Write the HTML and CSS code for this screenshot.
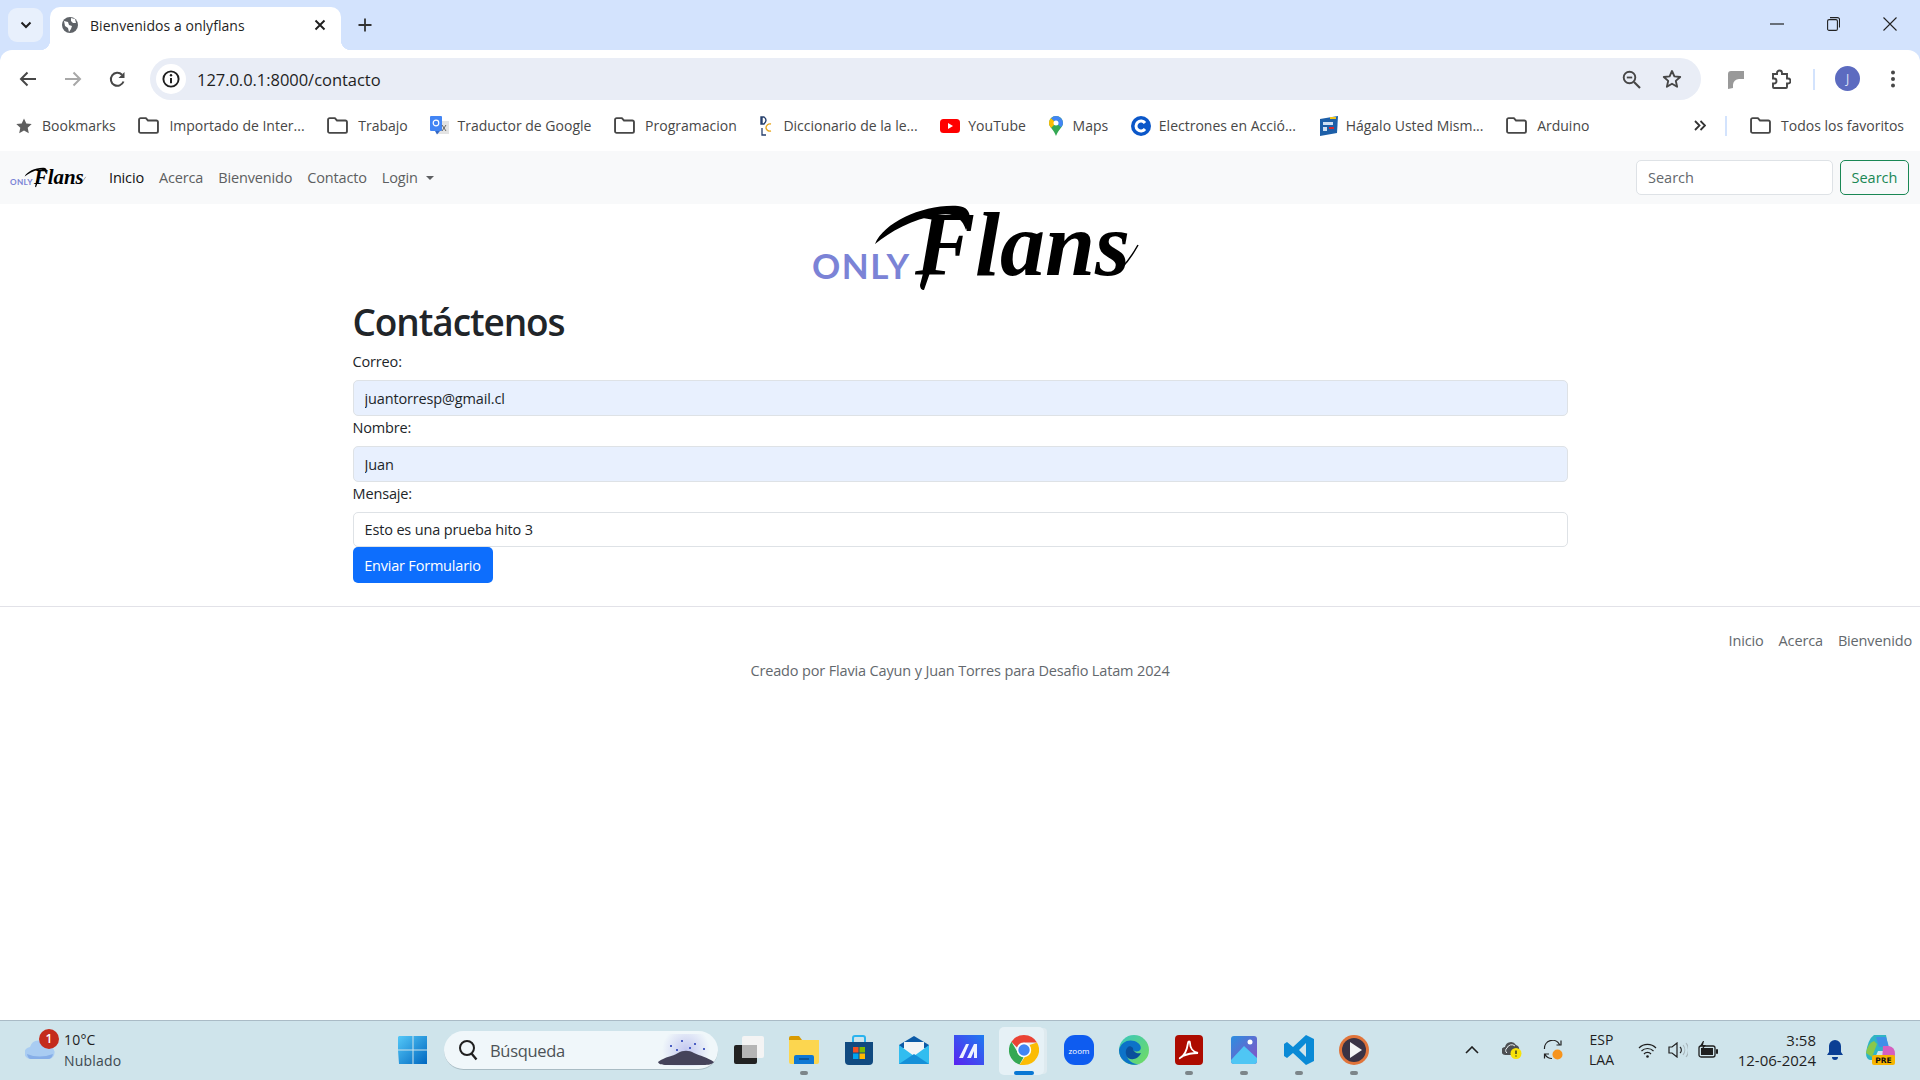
FILE: index.html
```html
<!DOCTYPE html>
<html lang="es">
<head>
<meta charset="utf-8">
<title>Bienvenidos a onlyflans</title>
<link rel="stylesheet" href="styles.css">
</head>
<body>
<svg class="defs" width="0" height="0" aria-hidden="true">
  <symbol id="folder" viewBox="0 0 20 16"><path d="M2.5 1h5l2 2.2h8a1.5 1.5 0 0 1 1.5 1.5v8.8a1.5 1.5 0 0 1-1.5 1.5h-15A1.5 1.5 0 0 1 1 13.5v-11A1.5 1.5 0 0 1 2.5 1z" fill="none" stroke="#474747" stroke-width="1.8"/></symbol>
</svg>
<div class="app">
  <header class="tabstrip">
    <button class="tablist"><svg width="12" height="8" viewBox="0 0 12 8"><path d="M1.5 1.5 6 6l4.5-4.5" fill="none" stroke="#1f1f1f" stroke-width="2"/></svg></button>
    <div class="tab">
      <svg class="favicon" width="16" height="16" viewBox="0 0 16 16"><circle cx="8" cy="8" r="8" fill="#5f6368"/><path d="M2 4l4 1 1 3 3 1-1 3-2 3-1-4-3-2zM9 1l4 1 1 4-3 0-2-2z" fill="#fff"/></svg>
      <span class="tab-title">Bienvenidos a onlyflans</span>
      <svg class="tab-close" width="12" height="12" viewBox="0 0 12 12"><path d="M1.5 1.5l9 9m0-9l-9 9" stroke="#1f1f1f" stroke-width="1.9"/></svg>
    </div>
    <svg class="newtab" width="14" height="14" viewBox="0 0 14 14"><path d="M7 0.5v13M0.5 7h13" stroke="#333" stroke-width="1.8"/></svg>
    <div class="winctl">
      <span class="wincell"><svg width="14" height="2" viewBox="0 0 14 2"><path d="M0 1h14" stroke="#222" stroke-width="1.2"/></svg></span>
      <span class="wincell"><svg width="13" height="14" viewBox="0 0 13 14"><rect x="0.6" y="2.6" width="9.8" height="10.8" rx="1.5" fill="none" stroke="#222" stroke-width="1.1"/><path d="M3 .6h7.5a2 2 0 0 1 2 2v8" fill="none" stroke="#222" stroke-width="1.1"/></svg></span>
      <span class="wincell"><svg width="14" height="14" viewBox="0 0 14 14"><path d="M.5.5l13 13m0-13l-13 13" stroke="#222" stroke-width="1.1"/></svg></span>
    </div>
  </header>

  <div class="toolbar-wrap">
  <div class="toolbar">
    <span class="tbcell"><svg width="18" height="16" viewBox="0 0 18 16"><path d="M17 8H2M8.500 1.500 2 8l6.500 6.500" fill="none" stroke="#474747" stroke-width="2"/></svg></span>
    <span class="tbcell"><svg width="18" height="16" viewBox="0 0 18 16"><path d="M1 8h15M9.500 1.500 16 8l-6.500 6.500" fill="none" stroke="#a8a8a8" stroke-width="2"/></svg></span>
    <span class="tbcell"><svg width="17" height="17" viewBox="0 0 17 17"><path d="M14.500 10.500A6.500 6.500 0 1 1 13 3.700" fill="none" stroke="#474747" stroke-width="2"/><path d="M15.500 1v6h-6z" fill="#474747"/></svg></span>
    <div class="omnibox">
      <span class="site-info"><svg width="18" height="18" viewBox="0 0 18 18"><circle cx="9" cy="9" r="7.600" fill="none" stroke="#1f1f1f" stroke-width="1.900"/><path d="M9 8v5.200" stroke="#1f1f1f" stroke-width="2"/><circle cx="9" cy="5.300" r="1.200" fill="#1f1f1f"/></svg></span>
      <span class="url">127.0.0.1:8000/contacto</span>
      <svg class="omni-zoom" width="19" height="19" viewBox="0 0 19 19"><circle cx="7.500" cy="7.500" r="5.800" fill="none" stroke="#474747" stroke-width="1.900"/><path d="M12 12l6 6" stroke="#474747" stroke-width="2.100"/><path d="M4.800 7.500h5.400" stroke="#474747" stroke-width="1.800"/></svg>
      <svg class="omni-star" width="20" height="20" viewBox="0 0 20 20"><path d="M10 2l2.400 5.400 5.800.6-4.400 3.900 1.300 5.800-5.100-3-5.100 3 1.300-5.800L1.800 8l5.800-.6z" fill="none" stroke="#474747" stroke-width="1.900" stroke-linejoin="round"/></svg>
    </div>
    <span class="tbcell tb-ext"><svg width="19" height="19" viewBox="0 0 19 19"><path d="M2 19V4a3 3 0 0 1 3-3h13v8h-5a6 6 0 0 0-6 6v3z" fill="#999"/></svg></span>
    <span class="tbcell"><svg width="20" height="20" viewBox="0 0 20 20"><path d="M2 5h4V4a2.500 2.500 0 0 1 5 0v1h5v4.500h1a2.500 2.500 0 0 1 0 5h-1V18a1 1 0 0 1-1 1H3a1 1 0 0 1-1-1v-3.500h1a2.500 2.500 0 0 0 0-5H2z" fill="none" stroke="#474747" stroke-width="1.900"/></svg></span>
    <span class="tb-divider"></span>
    <span class="avatar">J</span>
    <span class="tbcell"><svg width="4" height="18" viewBox="0 0 4 18"><circle cx="2" cy="2.500" r="2" fill="#474747"/><circle cx="2" cy="9" r="2" fill="#474747"/><circle cx="2" cy="15.500" r="2" fill="#474747"/></svg></span>
  </div>
  </div>

  <nav class="bookmarks">
    <span class="bm"><svg width="16" height="16" viewBox="0 0 16 16"><path d="M8 .5l2.300 5 5.400.6-4 3.700 1.100 5.400L8 12.500l-4.800 2.700 1.100-5.400-4-3.700 5.400-.6z" fill="#5f5f5f"/></svg>Bookmarks</span>
    <span class="bm"><svg class="ic-folder"><use href="#folder"/></svg>Importado de Inter...</span>
    <span class="bm"><svg class="ic-folder"><use href="#folder"/></svg>Trabajo</span>
    <span class="bm bm-tight"><svg width="19" height="20" viewBox="0 0 19 20"><rect x="7" y="5" width="12" height="13" fill="#e3e3e3"/><rect width="12" height="15" rx="1" fill="#4285f4"/><path d="M5 15h5l-3 3.500z" fill="#3367c4"/><circle cx="6" cy="7" r="2.800" fill="none" stroke="#fff" stroke-width="1.200"/><path d="M12 9l4 6m0-6l-4 6" stroke="#666" stroke-width="1"/></svg>Traductor de Google</span>
    <span class="bm"><svg class="ic-folder"><use href="#folder"/></svg>Programacion</span>
    <span class="bm"><svg width="14" height="20" viewBox="0 0 14 20"><path d="M2 1h3q4 3 0 7H2zM3 1v7" fill="none" stroke="#27406d" stroke-width="1.400"/><path d="M12 8a4 4 0 0 0-5 4 4 4 0 0 0 5 3" fill="none" stroke="#e9a820" stroke-width="1.400"/><path d="M3 12v7h4" fill="none" stroke="#27406d" stroke-width="1.300"/></svg>Diccionario de la le...</span>
    <span class="bm bm-tight"><svg width="20" height="14" viewBox="0 0 20 14"><rect width="20" height="14" rx="3.500" fill="#f00"/><path d="M8 4l5 3-5 3z" fill="#fff"/></svg>YouTube</span>
    <span class="bm"><svg width="14" height="20" viewBox="0 0 14 20"><path d="M7 0a7 7 0 0 1 7 7c0 4-5 7-7 13-2-6-7-9-7-13a7 7 0 0 1 7-7z" fill="#34a853"/><path d="M2 2.200A7 7 0 0 1 7 0a7 7 0 0 1 5 2L7 7z" fill="#4285f4"/><path d="M0 7c0-2 .8-3.600 2-4.800L7 7l-5 5C1 10.500 0 9 0 7z" fill="#fbbc04"/><path d="M12 2a7 7 0 0 1 2 5c0 1.500-.8 3-1.800 4.300L7 7z" fill="#4285f4"/><circle cx="7" cy="7" r="2.500" fill="#fff"/></svg>Maps</span>
    <span class="bm bm-tight"><svg width="20" height="20" viewBox="0 0 20 20"><circle cx="10" cy="10" r="10" fill="#0b57c9"/><path d="M14 7a5 5 0 1 0 0 6" fill="none" stroke="#fff" stroke-width="3"/></svg>Electrones en Acció...</span>
    <span class="bm bm-tight"><svg width="19" height="20" viewBox="0 0 19 20"><path d="M1 3l18-3-1 17-17 3z" fill="#1d5fa8"/><path d="M4 6h10v3H4zM4 11h4v4H4z" fill="#cfe0f2"/><path d="M10 11h5v2h-5z" fill="#d8262c"/><path d="M11 1h6v2h-6z" fill="#f0c419"/></svg>Hágalo Usted Mism...</span>
    <span class="bm"><svg class="ic-folder"><use href="#folder"/></svg>Arduino</span>
    <svg class="bm-more" width="12" height="11" viewBox="0 0 12 11"><path d="M1 1l4.500 4.500L1 10M6.500 1 11 5.500 6.500 10" fill="none" stroke="#333" stroke-width="1.800"/></svg>
    <span class="bm-divider"></span>
    <span class="bm"><svg class="ic-folder"><use href="#folder"/></svg>Todos los favoritos</span>
  </nav>

  <div class="navbar">
    <svg class="logo-small" viewBox="0 0 327 92" width="76" height="36">
      <text class="logo-only" x="0" y="75">ONLY</text>
      <text class="logo-flans" x="103" y="71">Flans</text>
      <path class="logo-swash" d="M63 40C72 18 112 0 146 2c14 1 14 14 8 24-4-12-12-18-28-15C100 15 78 28 63 40zM114 58l7 2-9 26q-4 0-4-5z"/>
      <path class="logo-tail" d="M300 70Q312 66 326 41"/>
    </svg>
    <a class="nav-link active">Inicio</a>
    <a class="nav-link">Acerca</a>
    <a class="nav-link">Bienvenido</a>
    <a class="nav-link">Contacto</a>
    <a class="nav-link">Login<i class="caret"></i></a>
    <input class="nav-search" placeholder="Search">
    <button class="btn-search">Search</button>
  </div>

  <main class="page">
    <div class="hero">
      <svg class="logo-big" viewBox="0 0 357 92" width="357" height="92">
        <text class="logo-only" x="30" y="75">ONLY</text>
        <text class="logo-flans" x="133" y="71">Flans</text>
        <path class="logo-swash" d="M93 40C102 18 142 0 176 2c14 1 14 14 8 24-4-12-12-18-28-15C130 15 108 28 93 40zM144 58l7 2-9 26q-4 0-4-5z"/>
        <path class="logo-tail" d="M330 70Q342 66 356 41"/>
      </svg>
    </div>
    <section class="container">
      <h1>Contáctenos</h1>
      <form class="contact">
        <label>Correo:</label>
        <input class="field autofill" value="juantorresp@gmail.cl">
        <label>Nombre:</label>
        <input class="field autofill" value="Juan">
        <label>Mensaje:</label>
        <input class="field last" value="Esto es una prueba hito 3">
        <button class="send" type="button">Enviar Formulario</button>
      </form>
    </section>
    <footer class="foot">
      <div class="foot-links"><a>Inicio</a><a>Acerca</a><a>Bienvenido</a></div>
      <p class="foot-text">Creado por Flavia Cayun y Juan Torres para Desafio Latam 2024</p>
    </footer>
  </main>

  <div class="taskbar">
    <div class="weather">
      <svg class="cloud" width="30" height="20" viewBox="0 0 30 20"><path d="M6 20a6 6 0 0 1-1-12 9 9 0 0 1 17-1 6.500 6.500 0 0 1 2 13z" fill="#a9ccf2"/><path d="M2 15q12 5 26 0-1 5-5 5H6q-3 0-4-5z" fill="#86aee8"/></svg>
      <span class="badge">1</span>
      <div class="weather-text"><span class="temp">10°C</span><span>Nublado</span></div>
    </div>
    <span class="tk">
      <svg width="30" height="30" viewBox="0 0 30 30"><defs><linearGradient id="w" x1="0" y1="0" x2="1" y2="1"><stop offset="0" stop-color="#54c8f8"/><stop offset="1" stop-color="#0067c0"/></linearGradient></defs><path d="M1 1h13.500v13.500H0V2zM15.500 1H29v13.500H15.500zM0 15.500h14.500V29H1zM15.500 15.500H29V29H15.500z" fill="url(#w)"/></svg>
    </span>
    <div class="search">
      <svg width="20" height="22" viewBox="0 0 20 22"><circle cx="9" cy="9" r="7" fill="none" stroke="#1f1f1f" stroke-width="2"/><path d="M13.500 14.500l5 6" stroke="#1f1f1f" stroke-width="2.300"/></svg>
      <span>Búsqueda</span>
      <svg class="search-art" width="60" height="32" viewBox="0 0 60 32"><defs><radialGradient id="g"><stop offset="0" stop-color="#c4c8f0"/><stop offset="1" stop-color="#f0f7fa"/></radialGradient></defs><circle cx="30" cy="16" r="24" fill="url(#g)"/><path d="M2 28c8-6 14-5 20-9 5-3 11-3 16 0 6 3 13 4 20 9-2 3-8 3-12 3H12c-4 0-9 0-10-3z" fill="#45435a"/><path d="M14 12h2M25 7h2M38 10h2M47 15h2M20 16h2M33 14h2" stroke="#4c5fc4" stroke-width="2"/></svg>
    </div>
    <span class="tk tk-first">
      <svg width="30" height="28" viewBox="0 0 30 28"><rect y="9" width="23" height="19" rx="2" fill="#222"/><rect x="8" width="22" height="22" rx="2" fill="#f4f4f4"/><rect x="8" y="9" width="15" height="13" fill="#b5b5b5"/></svg>
    </span>
    <span class="tk on">
      <svg width="30" height="28" viewBox="0 0 30 28"><path d="M0 2a2 2 0 0 1 2-2h8l3 4H0z" fill="#d99a00"/><path d="M0 4h30v22a2 2 0 0 1-2 2H2a2 2 0 0 1-2-2z" fill="#fcd64f"/><path d="M5 28v-7a2 2 0 0 1 2-2h16a2 2 0 0 1 2 2v7z" fill="#0f78d4"/><path d="M10 23h10" stroke="#0a4c8a" stroke-width="1.500"/></svg>
    </span>
    <span class="tk">
      <svg width="30" height="30" viewBox="0 0 30 30"><path d="M9 7V3a2 2 0 0 1 2-2h8a2 2 0 0 1 2 2v4" fill="none" stroke="#2ab3ee" stroke-width="2"/><path d="M1 7h28v19a4 4 0 0 1-4 4H5a4 4 0 0 1-4-4z" fill="#114a80"/><rect x="9" y="12" width="5.500" height="5.500" fill="#f25022"/><rect x="15.500" y="12" width="5.500" height="5.500" fill="#7fba00"/><rect x="9" y="18.500" width="5.500" height="5.500" fill="#00a4ef"/><rect x="15.500" y="18.500" width="5.500" height="5.500" fill="#ffb900"/></svg>
    </span>
    <span class="tk">
      <svg width="30" height="28" viewBox="0 0 30 28"><path d="M0 9 15 0l15 9v3H0z" fill="#0c5aa6"/><path d="M5 6h20v9l-10 7-10-7z" fill="#f2f5f7"/><path d="M0 9l15 11L30 9v19H0z" fill="#31bdf0"/><path d="M0 28l15-10 15 10z" fill="#1590d8"/></svg>
    </span>
    <span class="tk">
      <svg width="30" height="30" viewBox="0 0 30 30"><defs><linearGradient id="m" x1="0" y1="1" x2="1" y2="0"><stop offset="0" stop-color="#5b22f0"/><stop offset="1" stop-color="#1e7cf0"/></linearGradient></defs><rect width="30" height="30" fill="url(#m)"/><path d="M5 23l7-14h3L9 23zM13 23l7-14h3v14h-3v-7l-3 7z" fill="#eef2ff"/></svg>
    </span>
    <span class="tk active">
      <svg width="30" height="30" viewBox="0 0 30 30"><path d="M15 0a15 15 0 0 1 13 7.500H15a7.500 7.500 0 0 0-7 5L2.400 6.800A15 15 0 0 1 15 0z" fill="#ea4335"/><path d="M2.400 6.800 8.500 17a7.500 7.500 0 0 0 6 5.400L10.500 29.400A15 15 0 0 1 2.400 6.800z" fill="#34a853"/><path d="M28 7.500A15 15 0 0 1 15 30h-4.500l6-9.200A7.500 7.500 0 0 0 20.500 10z" fill="#fbbc04"/><circle cx="15" cy="15" r="7.200" fill="#fff"/><circle cx="15" cy="15" r="5.700" fill="#4285f4"/></svg>
    </span>
    <span class="tk">
      <svg width="30" height="30" viewBox="0 0 30 30"><rect width="30" height="30" rx="11" fill="#0e5cf0"/><text class="zoomtxt" x="15" y="18.500">zoom</text></svg>
    </span>
    <span class="tk">
      <svg width="30" height="30" viewBox="0 0 30 30"><defs><linearGradient id="e" x1="0" y1="0" x2="1" y2="1"><stop offset="0" stop-color="#38c6c0"/><stop offset="1" stop-color="#74dd5c"/></linearGradient></defs><circle cx="15" cy="15" r="15" fill="url(#e)"/><path d="M0 15C2 6 12 3 19 8c3 2 4 6 1 8-3 1-7 0-6-3-5 0-7 4-6 8 1 5 7 9 13 8-10 3-21-3-21-14z" fill="#0c72c8"/><path d="M14 13c0 4 4 6 8 5-2 5-8 8-13 5-3-3-3-9 0-11 1-1 3-1 5 1z" fill="#0a4f9c"/></svg>
    </span>
    <span class="tk on">
      <svg width="28" height="30" viewBox="0 0 28 30"><rect width="28" height="30" rx="4" fill="#ad0b00"/><path d="M5 23c4-2 7-8 8-15 .3-2 2-2 2 0 0 5 3 9 8 10-5 0-11 1-15 3-2 1-4 3-3 2z" fill="none" stroke="#fff" stroke-width="1.800"/></svg>
    </span>
    <span class="tk on">
      <svg width="26" height="28" viewBox="0 0 26 28"><defs><linearGradient id="p" x1="0" y1="0" x2="1" y2="1"><stop offset="0" stop-color="#2b8fe0"/><stop offset="1" stop-color="#8a4fc4"/></linearGradient></defs><rect width="26" height="28" rx="3" fill="url(#p)"/><path d="M0 24 13 10l13 12v3a3 3 0 0 1-3 3H3a3 3 0 0 1-3-3z" fill="#4fc6f4"/><circle cx="19" cy="6" r="2.500" fill="#fff"/></svg>
    </span>
    <span class="tk on">
      <svg width="30" height="30" viewBox="0 0 30 30"><path d="M22 0l8 4v22l-8 4-13-12-6 5-3-2v-12l3-2 6 5zm0 8-7 7 7 7z" fill="#0a8ad6"/></svg>
    </span>
    <span class="tk on">
      <svg width="30" height="30" viewBox="0 0 30 30"><circle cx="15" cy="15" r="15" fill="#e0743a"/><circle cx="15" cy="15" r="12" fill="#3b3344"/><path d="M11 7l12 8-12 8z" fill="#f4f4f4"/></svg>
    </span>

    <div class="tray">
      <svg class="t-chev" width="14" height="8" viewBox="0 0 14 8"><path d="M1 7l6-6 6 6" fill="none" stroke="#1f1f1f" stroke-width="1.600"/></svg>
      <span class="t-cloud"><svg width="20" height="18" viewBox="0 0 20 18"><path d="M4 14a4 4 0 0 1-1-8 6 6 0 0 1 11-2 4 4 0 0 1 3 5l-5 5z" fill="#4c4f52"/><path d="M5 12a3 3 0 0 1 0-5 5 5 0 0 1 8-2" fill="none" stroke="#e8eef0" stroke-width="1"/><circle cx="14" cy="12.500" r="5.500" fill="#f7e20a"/><path d="M14 9.500v3.500M14 14.500v1" stroke="#222" stroke-width="1.300"/></svg></span>
      <span class="t-sync"><svg width="20" height="20" viewBox="0 0 20 20"><path d="M1.500 9A8 8 0 0 1 16.500 4.500M18 .5V5h-4.500M1.500 18.500V14H6M2 14.500a8 8 0 0 0 7 4" fill="none" stroke="#222" stroke-width="1.200"/><circle cx="14.500" cy="14.500" r="5" fill="#f7941d"/></svg></span>
      <span class="t-lang"><span>ESP</span><span>LAA</span></span>
      <span class="t-wifi"><svg width="19" height="16" viewBox="0 0 19 16"><path d="M1 6a12 12 0 0 1 17 0M3.500 9a8.500 8.500 0 0 1 12 0M6 12a4.500 4.500 0 0 1 7 0" fill="none" stroke="#1f1f1f" stroke-width="1.200"/><circle cx="9.500" cy="14.500" r="1.300" fill="#1f1f1f"/></svg></span>
      <span class="t-vol"><svg width="20" height="16" viewBox="0 0 20 16"><path d="M1 5h3l5-4v14l-5-4H1z" fill="none" stroke="#1f1f1f" stroke-width="1.200"/><path d="M12 5a4 4 0 0 1 0 6" fill="none" stroke="#1f1f1f" stroke-width="1.100"/><path d="M15 3a8 8 0 0 1 0 10M18 1a11 11 0 0 1 0 14" fill="none" stroke="#a8b5ba" stroke-width="1.100"/></svg></span>
      <span class="t-bat"><svg width="20" height="18" viewBox="0 0 20 18"><rect x="1" y="5" width="16" height="11" rx="2" fill="none" stroke="#1f1f1f" stroke-width="1.300"/><rect x="3" y="7" width="12" height="7" fill="#1f1f1f"/><rect x="18" y="8" width="2" height="5" rx="1" fill="#1f1f1f"/><path d="M5 0 2 5h3l-1 4 4-5H5l1-4z" fill="#1f1f1f"/></svg></span>
      <span class="t-clock"><span>3:58</span><span>12-06-2024</span></span>
      <span class="t-bell"><svg width="16" height="20" viewBox="0 0 16 20"><path d="M8 0a6 6 0 0 1 6 6v6l2 3H0l2-3V6a6 6 0 0 1 6-6z" fill="#0b3f94"/><path d="M5 17h6a3 3 0 0 1-6 0z" fill="#0b3f94"/></svg></span>
      <span class="t-copilot"><svg width="29" height="30" viewBox="0 0 29 30"><path d="M8 0h12l3 16H12l-4 9H4Q0 24 0 18Q2 4 8 0z" fill="#2fb5c4"/><path d="M10 2h10l3 10H13z" fill="#3f8fe8"/><path d="M0 18q2-10 8-12l3 3-5 13z" fill="#8ac84a"/><path d="M17 11h6q6 1 6 8 0 6-4 7H16z" fill="#d55fc0"/><rect x="6" y="20" width="23" height="10" rx="2" fill="#f7b500"/><text class="pre" x="17.500" y="28">PRE</text></svg></span>
    </div>
  </div>
</div>
</body>
</html>
```
FILE: styles.css
```css
* { box-sizing: border-box; }
html, body { margin: 0; height: 100%; overflow: hidden; background: #fff; }
body { font-family: "Open Sans", "Noto Sans", sans-serif; color: #212529; }
.defs { position: absolute; }
.app { display: flex; flex-direction: column; height: 100vh; }

/* browser tab strip */
.tabstrip { height: 50px; flex: none; background: #d3e3fd; display: flex; align-items: flex-end; padding-left: 8px; }
.tablist { width: 35px; height: 34px; margin-bottom: 8px; border: 0; border-radius: 9px; background: #e8f0fc; display: flex; align-items: center; justify-content: center; padding: 0; }
.tab { position: relative; width: 291px; height: 43px; margin-left: 7px; background: #fff; border-radius: 10px 10px 0 0; display: flex; align-items: center; padding: 0 0 7px 12px; font-size: 14px; letter-spacing: 0.05px; color: #1f1f1f; }
.tab::before, .tab::after { content: ""; position: absolute; bottom: 0; width: 10px; height: 10px; }
.tab::before { left: -10px; background: radial-gradient(circle at 0 0, #d3e3fd 10px, #fff 10.500px); }
.tab::after { right: -10px; background: radial-gradient(circle at 100% 0, #d3e3fd 10px, #fff 10.500px); }
.favicon { flex: none; }
.tab-title { margin-left: 12px; flex: 1; }
.tab-close { margin-right: 15px; }
.newtab { margin: 0 0 18px 17px; }
.winctl { margin-left: auto; display: flex; align-self: stretch; padding-right: 2px; }
.wincell { width: 56.500px; display: flex; align-items: center; justify-content: center; padding-bottom: 2px; }

/* toolbar */
.toolbar-wrap { background: #d3e3fd; flex: none; }
.toolbar { height: 50px; background: #fff; border-radius: 12px 12px 0 0; display: flex; align-items: flex-end; padding: 0 5px; }
.tbcell { width: 45px; height: 42px; display: flex; align-items: center; justify-content: center; flex: none; }
.tb-ext { margin-left: 12px; }
.omnibox { flex: 1; height: 42px; margin-left: 10px; border-radius: 21px; background: #e9edf6; display: flex; align-items: center; padding: 0 19px 0 6px; }
.site-info { width: 30px; height: 30px; border-radius: 50%; background: #fff; display: flex; align-items: center; justify-content: center; flex: none; }
.url { margin-left: 11px; font-size: 16.500px; letter-spacing: -0.04px; color: #1f1f1f; flex: 1; }
.omni-star { margin-left: 21px; }
.tb-divider { width: 2px; height: 21px; background: #d3e3fd; margin: 0 10px 10px; flex: none; }
.avatar { width: 25px; height: 25px; margin: 0 10px 9px; border-radius: 50%; background: #5c6bc0; color: #dfe3f6; font-size: 12px; display: flex; align-items: center; justify-content: center; flex: none; }

/* bookmarks */
.bookmarks { height: 51px; flex: none; display: flex; align-items: center; padding-left: 16px; gap: 22.700px; font-size: 14px; letter-spacing: 0; color: #474747; }
.bm { display: flex; align-items: center; gap: 10px; white-space: nowrap; }
.bm-tight { gap: 8px; }
.ic-folder { width: 21px; height: 17px; }
.bm-more { margin-left: auto; margin-right: -3px; }
.bm-divider { width: 2px; height: 20px; background: #d3e3fd; }
.bookmarks > .bm:last-child { margin-right: 16px; }

/* navbar */
.navbar { height: 53px; flex: none; background: #f8f9fa; display: flex; align-items: center; padding-left: 10px; padding-right: 11px; font-size: 14.500px; letter-spacing: -0.16px; }
.logo-small { margin-right: 23px; flex: none; overflow: visible; }
.nav-link { color: #5d5f61; margin-right: 15px; display: flex; align-items: center; }
.nav-link.active { color: #111; }
.caret { width: 0; height: 0; margin-left: 8px; border: 4px solid transparent; border-top-color: #5d5f61; border-bottom: 0; }
.nav-search { margin-left: auto; width: 197px; height: 35px; border: 1px solid #dee2e6; border-radius: 5px; background: #fff; padding: 0 11px; font: inherit; color: #212529; }
.nav-search::placeholder { color: #63686d; }
.btn-search { margin-left: 7px; width: 69px; height: 35px; border: 1px solid #198754; border-radius: 5px; background: transparent; color: #198754; font: inherit; padding: 0; }

/* logo */
.logo-only { font-family: Lato, sans-serif; font-weight: 700; font-size: 35px; letter-spacing: 1.500px; fill: #7b83d6; }
.logo-flans { font-family: "Liberation Serif", serif; font-style: italic; font-weight: 700; font-size: 90px; fill: #000; }
.logo-swash { fill: #000; }
.logo-tail { fill: none; stroke: #000; stroke-width: 1.500px; }

/* page */
.page { flex: 1; min-height: 0; display: flex; flex-direction: column; }
.hero { display: flex; justify-content: center; height: 90px; flex: none; }
.logo-big { overflow: visible; }
.container { width: 1215px; margin: 0 auto; flex: none; }
h1 { margin: 0; font-size: 37px; font-weight: 600; line-height: 56px; letter-spacing: -1.100px; color: #212529; }
.contact { display: flex; flex-direction: column; font-size: 14.500px; letter-spacing: -0.15px; }
.contact label { display: block; line-height: 24px; margin-bottom: 6px; }
.field { width: 100%; height: 36px; border: 1px solid #dee2e6; border-radius: 5px; padding: 0 11px; font: inherit; letter-spacing: inherit; color: #212529; background: #fff; }
.field.autofill { background: #e8f0fe; }
.field.last { height: 35px; }
.send { align-self: flex-start; width: 140px; height: 36px; border: 0; border-radius: 5px; background: #0d6efd; color: #fff; font: inherit; letter-spacing: -0.2px; padding: 0; }
.foot { margin-top: 23px; border-top: 1px solid #e2e2e8; padding-top: 23px; font-size: 14.500px; letter-spacing: -0.15px; color: #63686d; }
.foot-links { display: flex; justify-content: flex-end; gap: 15px; padding-right: 8px; line-height: 22px; }
.foot-text { margin: 8px 0 0; text-align: center; line-height: 22px; }

/* taskbar */
.taskbar { height: 60px; flex: none; background: #cfe4eb; border-top: 1px solid #aabbc6; display: flex; align-items: center; padding-left: 25px; color: #1f1f1f; }
.weather { position: relative; width: 360px; flex: none; display: flex; align-items: center; gap: 9px; }
.cloud { flex: none; margin-top: -3px; }
.badge { position: absolute; left: 14px; top: -2px; width: 20px; height: 20px; border-radius: 50%; background: #c42b1c; color: #fff; font-size: 12px; font-weight: 600; display: flex; align-items: center; justify-content: center; }
.weather-text { display: flex; flex-direction: column; font-size: 14px; line-height: 21px; margin-top: -2px; letter-spacing: 0.2px; color: #3e4a50; }
.temp { color: #1f1f1f; }
.tk { position: relative; width: 55px; height: 59px; flex: none; display: flex; align-items: center; justify-content: center; padding-bottom: 2px; }
.tk.on::after { content: ""; position: absolute; bottom: 5px; left: 50%; margin-left: -4px; width: 8px; height: 4px; border-radius: 2px; background: #7c8589; }
.tk.active::before { content: ""; position: absolute; left: 3px; top: 6px; width: 45px; height: 48px; border-radius: 5px; background: #e6f1f6; box-shadow: 4px 0 0 -1px #deeaef; }
.tk.active svg { position: relative; }
.tk.active::after { content: ""; position: absolute; bottom: 5px; left: 50%; margin-left: -10px; width: 20px; height: 4px; border-radius: 2px; background: #0a78d4; }
.tk-first { margin-left: 3px; }
.search { width: 274px; height: 39px; margin-left: 4px; flex: none; border-radius: 20px; background: #f0f7fa; border-bottom: 1px solid #a9bcc4; display: flex; align-items: center; padding-left: 14px; font-size: 16.500px; letter-spacing: -0.3px; color: #4c5256; }
.search > span { margin-left: 12px; flex: 1; }
.search-art { margin-right: 2px; }
.zoomtxt { font-family: "Open Sans", sans-serif; font-size: 8px; fill: #fff; text-anchor: middle; }
.pre { font-family: "DejaVu Sans", sans-serif; font-size: 7.500px; font-weight: 700; fill: #111; text-anchor: middle; }

/* tray */
.tray { flex: 1; display: flex; align-items: center; font-size: 14px; color: #1f1f1f; padding-left: 84px; padding-bottom: 2px; }
.tray > span { display: flex; flex: none; }
.t-cloud { margin-left: 23px; }
.t-sync { margin-left: 21px; }
.t-lang { width: 25px; margin-left: 26px; flex-direction: column; align-items: center; line-height: 20px; }
.t-wifi { margin-left: 24px; }
.t-vol { margin-left: 11px; }
.t-bat { margin-left: 10px; }
.t-clock { width: 78px; margin-left: 20px; flex-direction: column; align-items: flex-end; line-height: 20px; white-space: nowrap; font-size: 15px; }
.t-bell { margin-left: 11px; }
.t-copilot { margin-left: 23px; }
```
